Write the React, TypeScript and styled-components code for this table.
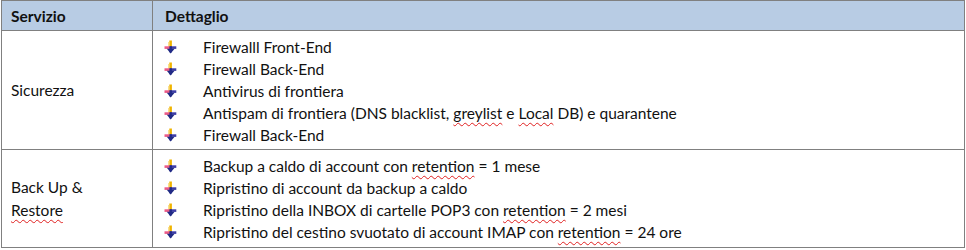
import React from "react";
import styled, { createGlobalStyle } from "styled-components";

const GlobalStyle = createGlobalStyle`
  html, body {
    margin: 0;
    padding: 0;
    background: #ffffff;
  }
  body {
    font-family: Lato, "Liberation Sans", sans-serif;
    color: #111111;
  }
`;

const Wrapper = styled.div`
  padding: 0 0 0 1px;
  width: 964px;
`;

const Table = styled.table`
  width: 964px;
  border-collapse: collapse;
  table-layout: fixed;
  font-size: 15.5px;
`;

const HeadCell = styled.th<{ $w?: number; $pl?: number }>`
  background: #b8cce4;
  border: 1px solid #808080;
  height: 29px;
  padding: 0 0 0 ${(p) => p.$pl ?? 9}px;
  text-align: left;
  font-weight: 700;
  font-size: 15.5px;
  vertical-align: middle;
  ${(p) => (p.$w ? `width: ${p.$w}px;` : "")}
`;

const ServiceCell = styled.td`
  border: 1px solid #808080;
  padding: 0 0 0 9px;
  vertical-align: middle;
  line-height: 23px;
`;

const DetailCell = styled.td<{ $pb: number }>`
  border: 1px solid #808080;
  padding: 5px 0 ${(p) => p.$pb}px 11px;
  vertical-align: top;
`;

const List = styled.ul`
  list-style: none;
  margin: 0;
  padding: 0;
`;

const Item = styled.li`
  display: flex;
  align-items: center;
  height: 22px;
  white-space: nowrap;
`;

const BulletBox = styled.span`
  display: inline-flex;
  width: 13px;
  height: 14px;
  margin-right: 26px;
  flex: none;
`;

const Spell = styled.span`
  text-decoration: underline wavy #e02020;
  text-decoration-thickness: 1px;
  text-underline-offset: 3px;
`;

const Bullet = () => (
  <BulletBox>
    <svg width="13" height="14" viewBox="0 0 13 14">
      <rect x="5.3" y="0.5" width="2.6" height="6.5" fill="#f0b400" />
      <rect x="4.2" y="2" width="1.2" height="5" fill="#f9d870" />
      <rect x="0.5" y="6.3" width="5.5" height="2.6" fill="#ec5a86" />
      <rect x="6" y="6.3" width="6.3" height="2.6" fill="#3d3ca6" />
      <polygon points="2.8,8.8 10.6,8.8 6.6,13.6" fill="#1f2a82" />
      <rect x="5.4" y="6.3" width="2.5" height="6" fill="#222a88" />
    </svg>
  </BulletBox>
);

const securityItems: React.ReactNode[] = [
  "Firewalll Front-End",
  "Firewall Back-End",
  "Antivirus di frontiera",
  <>
    Antispam di frontiera (DNS blacklist, <Spell>greylist</Spell> e{" "}
    <Spell>Local</Spell> DB) e quarantene
  </>,
  "Firewall Back-End",
];

const backupItems: React.ReactNode[] = [
  <>
    Backup a caldo di account con <Spell>retention</Spell> = 1 mese
  </>,
  "Ripristino di account da backup a caldo",
  <>
    Ripristino della INBOX di cartelle POP3 con <Spell>retention</Spell> = 2
    mesi
  </>,
  <>
    Ripristino del cestino svuotato di account IMAP con{" "}
    <Spell>retention</Spell> = 24 ore
  </>,
];

const Items = ({ items }: { items: React.ReactNode[] }) => (
  <List>
    {items.map((it, i) => (
      <Item key={i}>
        <Bullet />
        <span>{it}</span>
      </Item>
    ))}
  </List>
);

export default function App() {
  return (
    <>
      <GlobalStyle />
      <Wrapper>
        <Table>
          <thead>
            <tr>
              <HeadCell $w={141}>Servizio</HeadCell>
              <HeadCell $pl={12}>Dettaglio</HeadCell>
            </tr>
          </thead>
          <tbody>
            <tr>
              <ServiceCell>Sicurezza</ServiceCell>
              <DetailCell $pb={3}>
                <Items items={securityItems} />
              </DetailCell>
            </tr>
            <tr>
              <ServiceCell>
                Back Up &amp;
                <br />
                <Spell>Restore</Spell>
              </ServiceCell>
              <DetailCell $pb={4}>
                <Items items={backupItems} />
              </DetailCell>
            </tr>
          </tbody>
        </Table>
      </Wrapper>
    </>
  );
}
